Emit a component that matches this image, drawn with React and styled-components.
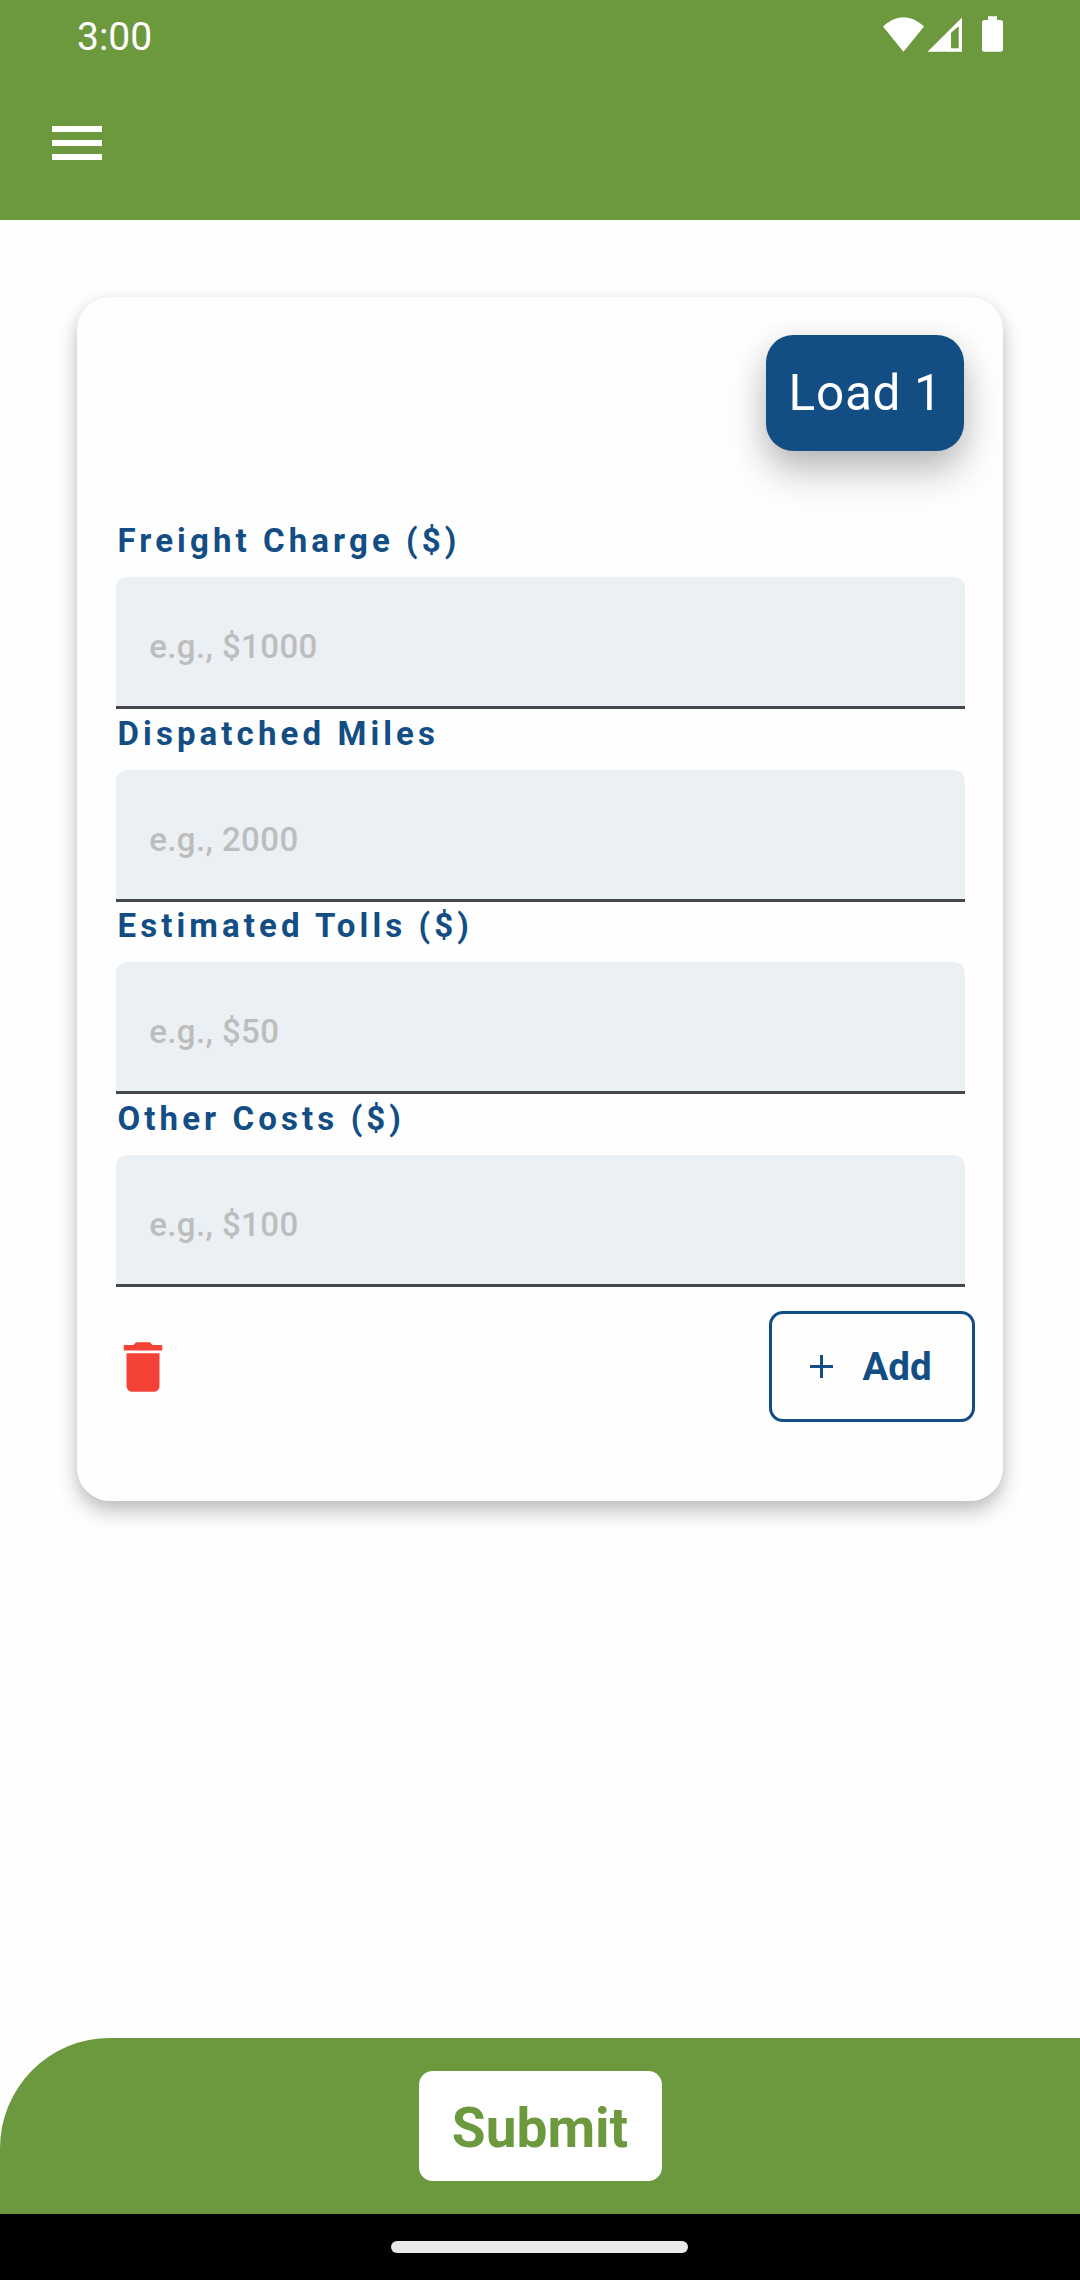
import React from 'react';
import styled, { createGlobalStyle } from 'styled-components';

const GREEN = '#6c993e';
const BLUE = '#124d84';

const GlobalStyle = createGlobalStyle`
  * { box-sizing: border-box; }
  body { margin: 0; background: #fefefe; }
  button, input { font: inherit; margin: 0; }
`;

const Screen = styled.div`
  width: 1080px;
  height: 2280px;
  display: flex;
  flex-direction: column;
  background: #fefefe;
  font-family: Roboto, sans-serif;
  overflow: hidden;
`;

const Header = styled.header`
  height: 220px;
  background: ${GREEN};
  flex: none;
`;

const StatusBar = styled.div`
  height: 66px;
  display: flex;
  justify-content: space-between;
  padding: 0 70px 0 77px;
`;

const Clock = styled.span`
  color: #fff;
  font-size: 39px;
  line-height: 46px;
  padding-top: 14px;
`;

const StatusIcons = styled.svg`
  width: 134px;
  height: 50px;
  margin-top: 8px;
  fill: #fff;
`;

const MenuButton = styled.button`
  display: flex;
  flex-direction: column;
  gap: 8px;
  width: 50px;
  margin: 60px 0 0 52px;
  padding: 0;
  border: 0;
  background: none;
`;

const MenuBar = styled.span`
  height: 6px;
  background: #fff;
`;

const Content = styled.main`
  flex: 1;
  padding: 76.5px 77px 0;
`;

const Card = styled.section`
  height: 1204.5px;
  padding: 38.5px;
  border-radius: 33px;
  background: #fefefe;
  box-shadow: 0 11px 20px rgba(0, 0, 0, 0.22), 0 2px 14px rgba(0, 0, 0, 0.07);
  display: flex;
  flex-direction: column;
`;

const Badge = styled.div`
  align-self: flex-end;
  width: 198px;
  height: 116px;
  flex: none;
  display: flex;
  align-items: center;
  justify-content: center;
  margin-right: 0.4px;
  border-radius: 27.5px;
  background: ${BLUE};
  color: #fff;
  font-size: 49.5px;
  letter-spacing: 0.69px;
  line-height: 58px;
  padding: 0 0 1px 1px;
  box-shadow: 0 22px 38px rgba(0, 0, 0, 0.22), 0 6px 30px rgba(0, 0, 0, 0.1);
`;

const Form = styled.form`
  margin-top: 66px;
`;

const Field = styled.label`
  display: flex;
  flex-direction: column;
  height: 192.5px;
`;

const Label = styled.span`
  height: 60.25px;
  padding: 4.4px 0 0 2px;
  color: ${BLUE};
  font-size: 33px;
  font-weight: 700;
  letter-spacing: 4.1px;
  line-height: 40px;
`;

const Input = styled.input`
  width: 100%;
  height: 132px;
  padding: 10px 33px 0 33.7px;
  border: 0;
  border-bottom: 3px solid #46464f;
  border-radius: 11px 11px 0 0;
  background: #ebf0f5;
  font-size: 33px;
  font-weight: 500;
  letter-spacing: 0.41px;
  outline: 0;
  &::placeholder {
    color: #bdbdbd;
    opacity: 1;
  }
`;

const Actions = styled.div`
  display: flex;
  align-items: center;
  justify-content: space-between;
  margin: 24.3px -10.7px 0 -5.5px;
`;

const DeleteButton = styled.button`
  display: flex;
  padding: 0;
  border: 0;
  background: none;
`;

const TrashIcon = styled.svg`
  width: 66px;
  height: 66px;
  fill: #f44336;
`;

const AddButton = styled.button`
  display: flex;
  align-items: center;
  width: 206.7px;
  height: 110.5px;
  padding: 0 0 0 38px;
  gap: 30px;
  border: 3px solid ${BLUE};
  border-radius: 14px;
  background: #fefefe;
  color: ${BLUE};
  font-size: 38.5px;
  font-weight: 700;
`;

const PlusIcon = styled.svg`
  width: 23px;
  height: 23px;
  stroke: ${BLUE};
  stroke-width: 3;
`;

const Footer = styled.footer`
  height: 176px;
  flex: none;
  display: flex;
  align-items: center;
  justify-content: center;
  border-top-left-radius: 110px;
  background: ${GREEN};
`;

const SubmitButton = styled.button`
  width: 243px;
  height: 110px;
  padding: 4px 0 0;
  border: 0;
  border-radius: 13.75px;
  background: #fff;
  color: ${GREEN};
  font-size: 55px;
  font-weight: 700;
`;

const NavBar = styled.div`
  height: 66px;
  flex: none;
  display: flex;
  justify-content: center;
  padding: 27px 1px 0 0;
  background: #000;
`;

const HomeHandle = styled.div`
  width: 297px;
  height: 11.5px;
  border-radius: 6px;
  background: #e9e9e9;
`;

const FIELDS = [
  ['Freight Charge ($)', 'e.g., $1000'],
  ['Dispatched Miles', 'e.g., 2000'],
  ['Estimated Tolls ($)', 'e.g., $50'],
  ['Other Costs ($)', 'e.g., $100'],
];

export default function App() {
  return (
    <Screen>
      <GlobalStyle />
      <Header>
        <StatusBar>
          <Clock>3:00</Clock>
          <StatusIcons viewBox="876 8 134 50">
            <path d="M903.5 51.7 883 26.4C889 21 896 17.2 903.5 17.2S918 21 924 26.4Z" />
            <path fillRule="evenodd" d="M962 17.5V51.7H927.5ZM951 32.8V48.3H958.7V26.2Z" />
            <path d="M988 20V16.3H997V20H1000.5Q1003 20 1003 22.5V49.2Q1003 51.7 1000.5 51.7H984.5Q982 51.7 982 49.2V22.5Q982 20 984.5 20Z" />
          </StatusIcons>
        </StatusBar>
        <MenuButton aria-label="Menu">
          <MenuBar />
          <MenuBar />
          <MenuBar />
        </MenuButton>
      </Header>
      <Content>
        <Card>
          <Badge>Load 1</Badge>
          <Form>
            {FIELDS.map(([label, hint]) => (
              <Field key={label}>
                <Label>{label}</Label>
                <Input placeholder={hint} />
              </Field>
            ))}
          </Form>
          <Actions>
            <DeleteButton aria-label="Delete">
              <TrashIcon viewBox="0 0 24 24">
                <path d="M19 4H15.5L14.5 3H9.5L8.5 4H5V6H19ZM6 19A2 2 0 0 0 8 21H16A2 2 0 0 0 18 19V7H6Z" />
              </TrashIcon>
            </DeleteButton>
            <AddButton>
              <PlusIcon viewBox="0 0 23 23">
                <path d="M0 11.5H23M11.5 0V23" />
              </PlusIcon>
              Add
            </AddButton>
          </Actions>
        </Card>
      </Content>
      <Footer>
        <SubmitButton>Submit</SubmitButton>
      </Footer>
      <NavBar>
        <HomeHandle />
      </NavBar>
    </Screen>
  );
}
